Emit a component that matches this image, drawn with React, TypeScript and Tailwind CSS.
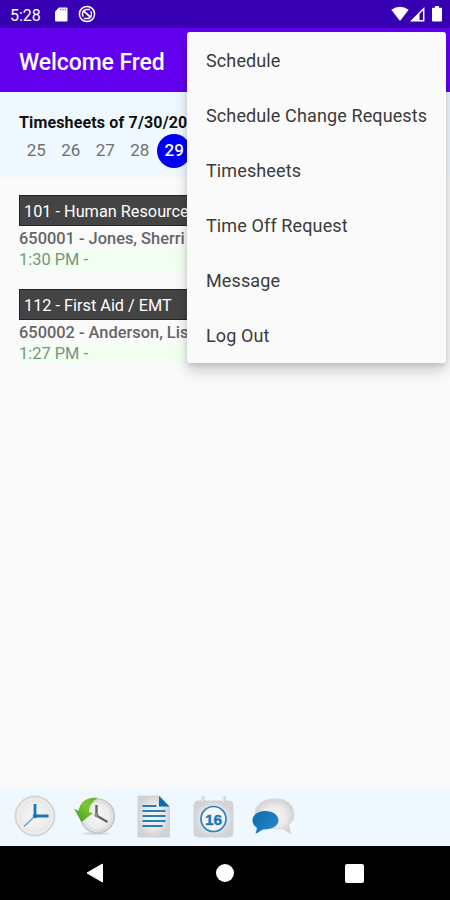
import React from 'react';

const menuItems = [
  'Schedule',
  'Schedule Change Requests',
  'Timesheets',
  'Time Off Request',
  'Message',
  'Log Out',
];

const days = [25, 26, 27, 28, 29, 30, 31];

const shifts = [
  { job: '101 - Human Resources', person: '650001 - Jones, Sherri', time: '1:30 PM -' },
  { job: '112 - First Aid / EMT', person: '650002 - Anderson, Lisa', time: '1:27 PM -' },
];

function StatusBar() {
  return (
    <div className="flex h-7 shrink-0 items-center bg-[#3700b3] pl-[10px] pr-[8px] text-white">
      <span className="w-[45px] text-[16px] leading-7 pt-[3px]">5:28</span>
      <svg width="13" height="15" viewBox="0 0 13 15" className="mt-px">
        <path d="M4 0.500h7.500a1 1 0 0 1 1 1v12a1 1 0 0 1-1 1h-10.500a1 1 0 0 1-1-1V4.500z" fill="white" />
        <path d="M5 2.500h6" stroke="#8a6ad0" strokeWidth="1.500" strokeDasharray="1.400 0.900" />
      </svg>
      <svg width="18" height="18" viewBox="0 0 18 18" className="ml-[10px]" fill="none" stroke="white">
        <circle cx="9" cy="9" r="7.600" strokeWidth="1.500" />
        <path d="M5.300 11.800A4.600 4.600 0 0 1 9 4.400h3M12.700 6.200A4.600 4.600 0 0 1 9 13.600H6" strokeWidth="1.500" />
        <path d="M5 5.500l8 7" strokeWidth="1.800" />
      </svg>
      <div className="ml-auto flex items-center">
        <svg width="18" height="16" viewBox="0 0 18 16">
          <path d="M0.300 3.800Q9-2.500 17.700 3.800L9 15z" fill="white" />
        </svg>
        <svg width="15" height="15" viewBox="0 0 15 15" className="ml-[1px]">
          <path d="M13.700 1.800v12H1.700z" fill="none" stroke="white" strokeWidth="1.500" />
          <path d="M9.500 5.500V14H1z" fill="white" />
        </svg>
        <svg width="10" height="16" viewBox="0 0 10 16" className="ml-[7px]">
          <path d="M3 0h4v1.800h2a1 1 0 0 1 1 1V14.500a1 1 0 0 1-1 1H1a1 1 0 0 1-1-1V2.800a1 1 0 0 1 1-1h2z" fill="white" />
        </svg>
      </div>
    </div>
  );
}

function ToolBar() {
  return (
    <div className="flex h-[59px] shrink-0 items-center gap-[18px] bg-[#f0f8ff] pb-[2px] pl-[14px]">
      <svg width="42" height="44" viewBox="0 0 42 44">
        <defs>
          <radialGradient id="silver">
            <stop offset="0" stopColor="#f7f7f7" />
            <stop offset="0.7" stopColor="#ececec" />
            <stop offset="1" stopColor="#d8d8d8" />
          </radialGradient>
          <linearGradient id="paper" x1="0" y1="0" x2="1" y2="1">
            <stop offset="0" stopColor="#d6d6d8" />
            <stop offset="0.5" stopColor="#f2f2f2" />
            <stop offset="1" stopColor="#cfcfd1" />
          </linearGradient>
          <radialGradient id="bubble">
            <stop offset="0" stopColor="#f5f5f5" />
            <stop offset="0.6" stopColor="#eaeaea" />
            <stop offset="1" stopColor="#d3d3d5" />
          </radialGradient>
          <linearGradient id="leaf" x1="0" y1="1" x2="1" y2="0">
            <stop offset="0" stopColor="#3e9a16" />
            <stop offset="0.6" stopColor="#7cc935" />
            <stop offset="1" stopColor="#5dab2d" />
          </linearGradient>
          <linearGradient id="speech" x1="0" y1="0" x2="1" y2="1">
            <stop offset="0" stopColor="#0b6cab" />
            <stop offset="1" stopColor="#2b8acb" />
          </linearGradient>
        </defs>
        <circle cx="21" cy="22" r="20" fill="url(#silver)" stroke="#d3d6d8" strokeWidth="1" />
        <circle cx="21" cy="22" r="17.200" fill="none" stroke="#f0f0f0" strokeWidth="1.500" />
        <path d="M21 10v12h13.500" fill="none" stroke="#1679ba" strokeWidth="2.800" />
        <path d="M21 22L10 32.500" stroke="#60a6d4" strokeWidth="1.500" />
        <circle cx="21" cy="22" r="2.200" fill="#1679ba" />
      </svg>
      <svg width="42" height="44" viewBox="0 0 42 44">
        <ellipse cx="22" cy="39.500" rx="14" ry="1.200" fill="#cfd5d8" />
        <circle cx="23.500" cy="22" r="17" fill="url(#silver)" stroke="#c0c3c4" strokeWidth="1.200" />
        <circle cx="23.500" cy="22" r="14.500" fill="none" stroke="#dedede" strokeWidth="1.500" />
        <path d="M22.500 11v10.500l11 6.500" fill="none" stroke="#666" strokeWidth="2.500" />
        <circle cx="22.500" cy="21" r="2.200" fill="#888" />
        <path d="M24 4C13 2.500 6 8 4.500 17L0 14.500L7.500 28L19 19L15 18C15.500 12 18 7 24 4z" fill="url(#leaf)" />
      </svg>
      <svg width="42" height="44" viewBox="0 0 42 44">
        <path d="M4 2h22l9.500 10.500v30.500h-31.500z" fill="url(#bubble)" stroke="#cbcdd0" strokeWidth="0.800" />
        <path d="M25 2l10.500 10.500H25z" fill="#086eac" />
        <path d="M8.500 12h14M8.500 17h23M8.500 22h23M8.500 27h23M8.500 32h20" stroke="#257fb8" strokeWidth="1.900" />
      </svg>
      <svg width="42" height="44" viewBox="0 0 42 44" className="-ml-px">
        <rect x="1" y="7" width="39" height="36" rx="4" fill="url(#bubble)" stroke="#d5d5d7" />
        <path d="M10 3.500v6M31 3.500v6" stroke="#d0d2d4" strokeWidth="3.500" strokeLinecap="round" />
        <path d="M9.500 3v5M30.500 3v5" stroke="#eee" strokeWidth="1.200" />
        <circle cx="20.500" cy="25" r="12.500" fill="#f4f5f6" stroke="#2c82be" strokeWidth="1.700" />
        <text x="20.500" y="30.700" textAnchor="middle" fill="#1a75b4" stroke="#1a75b4" strokeWidth="0.400" fontFamily="Liberation Sans, sans-serif" fontWeight="700" fontSize="15.500">16</text>
      </svg>
      <svg width="44" height="44" viewBox="0 0 44 44" className="-ml-px">
        <path d="M22.500 5C34 4 42 11 42 20C42 26 39 29 36.500 31L39 40L30 34.500C13 36 3 29 3 20C3 11 11 5 22.500 5z" fill="url(#bubble)" stroke="#d9d9da" />
        <path d="M13.500 17C21 17 26.500 21 26.500 26.500C26.500 32 19 36 11 35.500L3.500 40L5 34C2 32 0.500 29 0.500 26.500C0.500 21 6 17 13.500 17z" fill="url(#speech)" />
      </svg>
    </div>
  );
}

export default function App() {
  return (
    <div className="relative flex h-[900px] w-[450px] flex-col overflow-hidden bg-[#fafafa] font-['Roboto',sans-serif]">
      <StatusBar />
      <header className="flex h-16 shrink-0 items-center bg-[#6200ee] pl-[19px]">
        <h1 className="pt-[6px] text-[23px] font-medium tracking-[-0.1px] text-white">Welcome Fred</h1>
      </header>
      <section className="h-[85px] shrink-0 bg-[#f0f8ff] pl-[19px] pt-[21px]">
        <h2 className="text-[16px] leading-5 font-bold tracking-[0.15px] text-[#111]">Timesheets of 7/30/2022</h2>
        <div className="flex">
          {days.map((day) => (
            <div key={day} className="flex h-[35px] w-[34.500px] items-center justify-center">
              <span
                className={
                  day === 29
                    ? 'flex size-[34px] shrink-0 items-center justify-center rounded-full bg-[#0000f5] text-[17px] font-medium text-white'
                    : 'text-[17px] text-[#707070]'
                }
              >
                {day}
              </span>
            </div>
          ))}
        </div>
      </section>
      <main className="flex grow flex-col gap-[19px] px-[19px] pt-[18px]">
        {shifts.map((shift) => (
          <article key={shift.job} className="h-[75px]">
            <h3 className="h-[31px] border border-[#222] bg-[#444] pl-[4px] pt-px text-[16.300px] leading-[30px] text-white">{shift.job}</h3>
            <p className="h-[23px] pt-px text-[16.400px] leading-[24px] font-medium text-[#666]">{shift.person}</p>
            <p className="h-[21px] bg-[#f0fff0] text-[16.400px] leading-[22px] text-[#848c84]">{shift.time}</p>
          </article>
        ))}
      </main>
      <ToolBar />
      <nav className="flex h-[54px] shrink-0 items-center justify-between bg-black pl-[86px] pr-[86px]">
        <svg width="18" height="20" viewBox="0 0 18 20"><path d="M16.500 1v18L1 10z" fill="white" stroke="white" strokeLinejoin="round" /></svg>
        <div className="size-[18px] rounded-full bg-white" />
        <div className="size-[19px] rounded-[2px] bg-white" />
      </nav>
      <ul className="absolute left-[187px] top-8 h-[331px] w-[259px] rounded-[3px] bg-[#fafafa] pt-px shadow-[0_8px_14px_rgba(0,0,0,0.18),0_2px_5px_rgba(0,0,0,0.1)]">
        {menuItems.map((item) => (
          <li key={item} className="flex h-[55px] items-center pl-[19px] text-[18px] whitespace-nowrap tracking-[0.120px] text-[#3b3b3b]">
            {item}
          </li>
        ))}
      </ul>
    </div>
  );
}
